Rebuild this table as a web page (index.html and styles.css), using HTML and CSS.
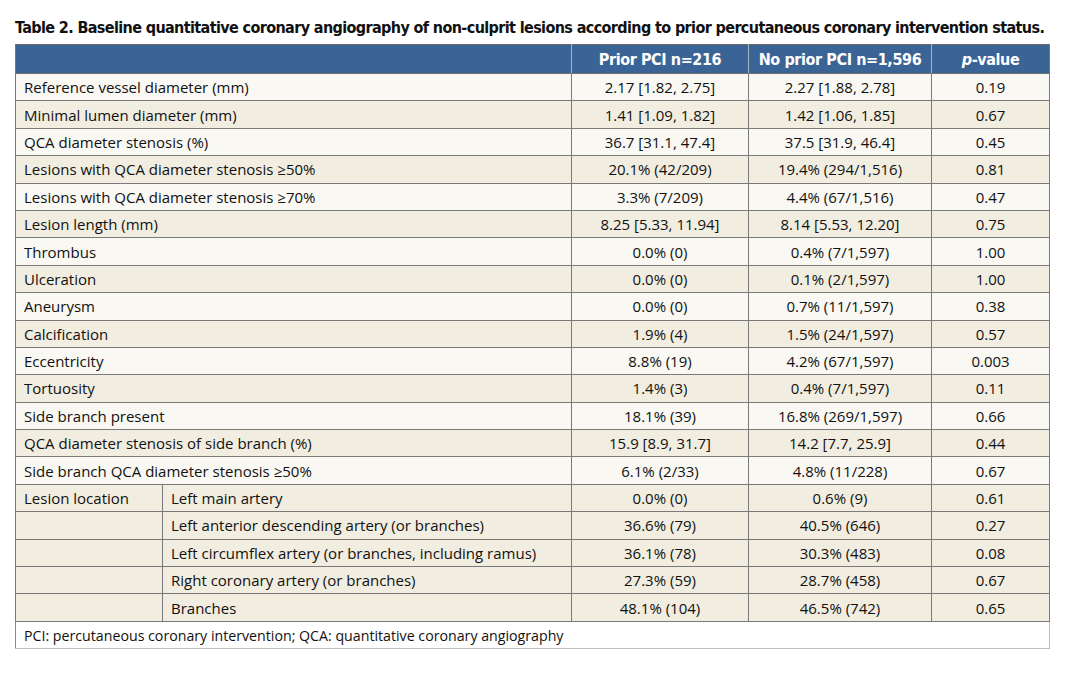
FILE: index.html
```html
<!DOCTYPE html>
<html>
<head>
<meta charset="utf-8">
<link rel="stylesheet" href="styles.css">
</head>
<body>
<div class="page">
<h1 class="title">Table 2. Baseline quantitative coronary angiography of non-culprit lesions according to prior percutaneous coronary intervention status.</h1>
<table class="tbl">
<colgroup>
<col class="c-a"><col class="c-b"><col class="c-2"><col class="c-3"><col class="c-4">
</colgroup>
<thead>
<tr class="head"><th colspan="2"></th><th>Prior PCI n=216</th><th>No prior PCI n=1,596</th><th><i>p</i>-value</th></tr>
</thead>
<tbody>
<tr class="lt"><td colspan="2" class="lbl">Reference vessel diameter (mm)</td><td>2.17 [1.82, 2.75]</td><td>2.27 [1.88, 2.78]</td><td>0.19</td></tr>
<tr class="bg"><td colspan="2" class="lbl">Minimal lumen diameter (mm)</td><td>1.41 [1.09, 1.82]</td><td>1.42 [1.06, 1.85]</td><td>0.67</td></tr>
<tr class="lt"><td colspan="2" class="lbl">QCA diameter stenosis (%)</td><td>36.7 [31.1, 47.4]</td><td>37.5 [31.9, 46.4]</td><td>0.45</td></tr>
<tr class="bg"><td colspan="2" class="lbl">Lesions with QCA diameter stenosis ≥50%</td><td>20.1% (42/209)</td><td>19.4% (294/1,516)</td><td>0.81</td></tr>
<tr class="lt"><td colspan="2" class="lbl">Lesions with QCA diameter stenosis ≥70%</td><td>3.3% (7/209)</td><td>4.4% (67/1,516)</td><td>0.47</td></tr>
<tr class="bg"><td colspan="2" class="lbl">Lesion length (mm)</td><td>8.25 [5.33, 11.94]</td><td>8.14 [5.53, 12.20]</td><td>0.75</td></tr>
<tr class="lt"><td colspan="2" class="lbl">Thrombus</td><td>0.0% (0)</td><td>0.4% (7/1,597)</td><td>1.00</td></tr>
<tr class="bg"><td colspan="2" class="lbl">Ulceration</td><td>0.0% (0)</td><td>0.1% (2/1,597)</td><td>1.00</td></tr>
<tr class="lt"><td colspan="2" class="lbl">Aneurysm</td><td>0.0% (0)</td><td>0.7% (11/1,597)</td><td>0.38</td></tr>
<tr class="bg"><td colspan="2" class="lbl">Calcification</td><td>1.9% (4)</td><td>1.5% (24/1,597)</td><td>0.57</td></tr>
<tr class="lt"><td colspan="2" class="lbl">Eccentricity</td><td>8.8% (19)</td><td>4.2% (67/1,597)</td><td>0.003</td></tr>
<tr class="bg"><td colspan="2" class="lbl">Tortuosity</td><td>1.4% (3)</td><td>0.4% (7/1,597)</td><td>0.11</td></tr>
<tr class="lt"><td colspan="2" class="lbl">Side branch present</td><td>18.1% (39)</td><td>16.8% (269/1,597)</td><td>0.66</td></tr>
<tr class="bg"><td colspan="2" class="lbl">QCA diameter stenosis of side branch (%)</td><td>15.9 [8.9, 31.7]</td><td>14.2 [7.7, 25.9]</td><td>0.44</td></tr>
<tr class="lt"><td colspan="2" class="lbl">Side branch QCA diameter stenosis ≥50%</td><td>6.1% (2/33)</td><td>4.8% (11/228)</td><td>0.67</td></tr>
<tr class="bg"><td class="lbl">Lesion location</td><td class="lbl">Left main artery</td><td>0.0% (0)</td><td>0.6% (9)</td><td>0.61</td></tr>
<tr class="bg"><td class="lbl"></td><td class="lbl">Left anterior descending artery (or branches)</td><td>36.6% (79)</td><td>40.5% (646)</td><td>0.27</td></tr>
<tr class="bg"><td class="lbl"></td><td class="lbl">Left circumflex artery (or branches, including ramus)</td><td>36.1% (78)</td><td>30.3% (483)</td><td>0.08</td></tr>
<tr class="bg"><td class="lbl"></td><td class="lbl">Right coronary artery (or branches)</td><td>27.3% (59)</td><td>28.7% (458)</td><td>0.67</td></tr>
<tr class="bg"><td class="lbl"></td><td class="lbl">Branches</td><td>48.1% (104)</td><td>46.5% (742)</td><td>0.65</td></tr>
</tbody>
<tfoot>
<tr class="foot"><td colspan="5">PCI: percutaneous coronary intervention; QCA: quantitative coronary angiography</td></tr>
</tfoot>
</table>
</div>
</body>
</html>
```
FILE: styles.css
```css
html, body {
  margin: 0;
  padding: 0;
  background: #ffffff;
}
.page {
  padding: 18px 0 0 15px;
  width: 1034px;
}
.title {
  margin: 0 0 7px 0;
  font-family: "DejaVu Sans Condensed", "DejaVu Sans", sans-serif;
  font-stretch: condensed;
  font-weight: bold;
  font-size: 16px;
  line-height: 19px;
  color: #111111;
  white-space: nowrap;
  letter-spacing: -0.62px;
}
.tbl {
  width: 1034px;
  table-layout: fixed;
  border-collapse: collapse;
  font-family: "Open Sans", "Noto Sans", sans-serif;
  font-size: 15px;
  color: #111111;
}
.c-a { width: 147px; }
.c-b { width: 409px; }
.c-2 { width: 177px; }
.c-3 { width: 183px; }
.c-4 { width: 118px; }
.head th {
  background: #3b6496;
  color: #ffffff;
  font-family: "DejaVu Sans Condensed", "DejaVu Sans", sans-serif;
  font-stretch: condensed;
  font-weight: bold;
  font-size: 16px;
  letter-spacing: -0.4px;
  height: 28px;
  padding: 0;
  text-align: center;
  border-top: 1px solid #6a6a6a;
  border-left: 1px solid #a6b3c4;
  border-right: 1px solid #a6b3c4;
  border-bottom: 1px solid #6f6f6f;
}
.head th:first-child { border-left: 1px solid #777777; }
.head th:last-child { border-right: 1px solid #777777; }
.tbl tbody td {
  height: 26.4px;
  padding: 0;
  text-align: center;
  border: 1px solid #7a7a7a;
  white-space: nowrap;
}
.tbl tbody td.lbl {
  text-align: left;
  padding-left: 8px;
}
.lt td { background: #f9f8f3; }
.bg td { background: #f1ede0; }
.foot td {
  background: #ffffff;
  height: 26.4px;
  padding: 0 0 0 8px;
  font-size: 14.2px;
  border-left: 1px solid #8a8a8a;
  border-right: 1px solid #bdbdbd;
  border-bottom: 1px solid #bdbdbd;
  border-top: 1px solid #7a7a7a;
}
```
